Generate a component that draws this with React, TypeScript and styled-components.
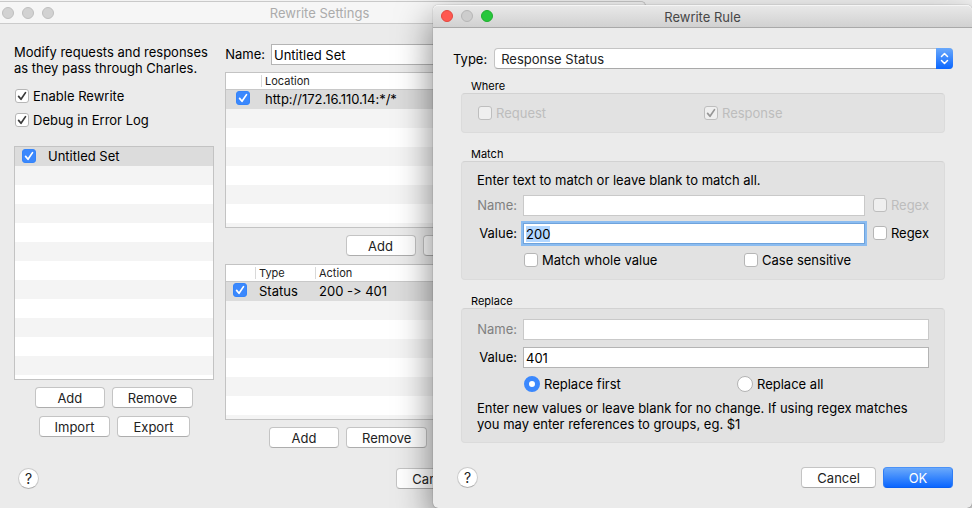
import React, { useEffect, useId, useRef } from "react";
import styled, { createGlobalStyle, css } from "styled-components";

const GlobalStyle = createGlobalStyle`
  *, *::before, *::after { box-sizing: border-box; }
  body { margin: 0; background: #f3f3f3; }
  body, button, input, select {
    font-family: Inter, "Liberation Sans", sans-serif;
    font-size: 13px;
    font-variant-ligatures: no-contextual;
    line-height: 16px;
    color: #000;
  }
`;

const Desktop = styled.div`
  position: relative;
  min-height: 100vh;
  padding-top: 1px;
  overflow: hidden;
`;

const Window = styled.section`
  background: #ebebeb;
  border-radius: 5px;
`;

const SettingsWindow = styled(Window)`
  margin: 0 326px 0 -6px;
  min-height: calc(100vh - 1px);
  border-top: 1px solid #c9c9c9;
  border-right: 1px solid #c9c9c9;
`;

const RuleWindow = styled(Window)`
  position: absolute;
  top: 5px;
  left: 433px;
  right: 0;
  box-shadow: 0 0 1px rgba(0, 0, 0, 0.6), 0 14px 36px rgba(0, 0, 0, 0.5);
`;

const TitleBar = styled.header<{ $active?: boolean }>`
  display: grid;
  grid-template-columns: 52px 1fr 52px;
  align-items: center;
  height: ${(p) => (p.$active ? 23 : 22)}px;
  padding: 0 8px;
  border-radius: 5px 5px 0 0;
  color: ${(p) => (p.$active ? "#474747" : "#ababab")};
  background: ${(p) => (p.$active ? "linear-gradient(#e9e9e9, #d1d1d1)" : "#f6f6f6")};
  border-bottom: 1px solid ${(p) => (p.$active ? "#a9a9a9" : "#cbcbcb")};
  ${(p) => p.$active && css`box-shadow: inset 0 1px #f5f5f5;`}
`;

const Title = styled.h1`
  margin: 0;
  padding-top: 1px;
  font-size: 13px;
  font-weight: 400;
  text-align: center;
`;

const Lights = styled.div`
  display: flex;
  gap: 8px;
`;

const Light = styled.button<{ $fill?: string; $edge?: string }>`
  width: 12px;
  height: 12px;
  padding: 0;
  border-radius: 50%;
  border: 1px solid ${(p) => p.$edge ?? "#bfbfbf"};
  background: ${(p) => p.$fill ?? "#d2d2d2"};
`;

const Button = styled.button<{ $primary?: boolean; $covered?: boolean }>`
  height: 21px;
  min-width: ${(p) => (p.$covered ? 82 : 70)}px;
  padding: 0 15px;
  border: 1px solid #c4c4c4;
  border-bottom-color: #adadad;
  border-radius: 4px;
  background: #fff;
  white-space: nowrap;
  line-height: 18px;
  color: #222;
  ${(p) =>
    p.$primary &&
    css`
      color: #fff;
      border-color: #4b92f7 #2f7df5 #0a5ff0;
      background: linear-gradient(#6aa9fb, #0a66ff);
    `}
`;

const HelpButton = styled.button`
  width: 21px;
  height: 21px;
  padding: 0;
  border: 1px solid #cacaca;
  border-bottom-color: #b0b0b0;
  border-radius: 50%;
  background: #fff;
  font-size: 14px;
  line-height: 18px;
  color: #222;
`;

const ButtonRow = styled.div<{ $start?: boolean }>`
  display: flex;
  align-items: flex-start;
  gap: 7px;
  height: 22px;
  justify-content: ${(p) => (p.$start ? "flex-start" : "center")};
  padding-left: ${(p) => (p.$start ? 44 : 0)}px;
`;

/* check boxes and radio buttons */

const Option = styled.label<{ $off?: boolean; $wide?: boolean }>`
  display: flex;
  align-items: center;
  gap: ${(p) => (p.$wide ? 12 : 4)}px;
  height: 16px;
  padding-left: 1px;
  white-space: nowrap;
  color: ${(p) => (p.$off ? "#bdbdbd" : "#000")};
`;

const Tick = styled.span`
  display: inline-grid;
  width: 14px;
  height: 14px;
  flex: none;
  > * { grid-area: 1 / 1; }
  svg { pointer-events: none; }
`;

const Box = styled.input<{ $blue?: boolean }>`
  appearance: none;
  width: 14px;
  height: 14px;
  margin: 0;
  border: 1px solid #b6b6b6;
  border-radius: 3px;
  background: #fff;
  &:disabled { background: #efefef; border-color: #bebebe; }
  ${(p) => p.$blue && css`border-color: #3484fa; background: #3b88fd;`}
`;

const Radio = styled.input`
  appearance: none;
  width: 16px;
  height: 16px;
  margin: 0;
  border: 1px solid #b3b3b3;
  border-radius: 50%;
  background: #fff;
  &:checked { border: 5px solid #3b88fd; }
`;

type CheckProps = {
  label?: string;
  name?: string;
  checked?: boolean;
  disabled?: boolean;
  blue?: boolean;
  wide?: boolean;
};

function TickBox({ checked, disabled, blue, name }: CheckProps) {
  return (
    <Tick>
      <Box type="checkbox" defaultChecked={checked} disabled={disabled} $blue={blue} aria-label={name} />
      {checked && (
        <svg width="14" height="14" viewBox="0 0 14 14" fill="none" aria-hidden="true">
          <path
            d="M3.6 7.4 6 10.3 10.5 3.6"
            stroke={blue ? "#fff" : disabled ? "#969696" : "#3a3a3a"}
            strokeWidth="1.7"
            strokeLinecap="round"
            strokeLinejoin="round"
          />
        </svg>
      )}
    </Tick>
  );
}

function Check(props: CheckProps) {
  return (
    <Option $off={props.disabled} $wide={props.wide}>
      <TickBox {...props} />
      {props.label}
    </Option>
  );
}

/* text fields */

const Field = styled.input`
  width: 100%;
  min-width: 0;
  height: 21px;
  padding: 1px 2px 0;
  border: 1px solid #b4b4b4;
  border-radius: 0;
  background: #fff;
  outline: none;
  &:disabled { border-color: #c9c9c9; }
  &:focus { border-color: #6fa3dc; box-shadow: 0 0 0 2px #8bbcf0; }
  &::selection { background: #b3d7ff; color: #000; }
`;

const FieldRow = styled.div`
  display: grid;
  grid-template-columns: 46px minmax(0, 1fr) auto;
  align-items: center;
`;

const FieldLabel = styled.label<{ $off?: boolean }>`
  padding: 0 6px 1px 0;
  display: flex;
  justify-content: flex-end;
  color: ${(p) => (p.$off ? "#808080" : "#000")};
`;

const Trailing = styled.div`
  padding: 0 0 1px 7px;
`;

/* settings window */

const Columns = styled.div`
  display: grid;
  grid-template-columns: 200px minmax(0, 1fr);
  gap: 11px;
  padding: 20px 20px 0;
`;

const Column = styled.div`
  display: flex;
  flex-direction: column;
  gap: 7px;
`;

const Intro = styled.p`
  margin: 0;
  white-space: nowrap;
`;

const Switches = styled.div`
  display: flex;
  flex-direction: column;
  gap: 8px;
  padding: 5px 0 11px;
`;

const SetList = styled.ul`
  height: 234px;
  margin: 0;
  padding: 0;
  list-style: none;
  border: 1px solid #c3c3c3;
  background: repeating-linear-gradient(#fff 0 19px, #f4f4f4 19px 38px);
`;

const SetItem = styled.li`
  display: flex;
  align-items: center;
  height: 19px;
  padding: 0 0 1px 6px;
  background: #dcdcdc;
`;

const TableFrame = styled.div`
  height: 156px;
  border: 1px solid #c3c3c3;
  background: repeating-linear-gradient(#fff 0 19px, #f4f4f4 19px 38px) 0 17px no-repeat, #fff;
`;

const Table = styled.table<{ $first: number }>`
  width: 100%;
  table-layout: fixed;
  border-collapse: separate;
  border-spacing: 0;
  text-align: left;
  th {
    height: 17px;
    padding: 0 0 0 4px;
    border-bottom: 1px solid #c8c8c8;
    background: linear-gradient(#d9d9d9, #d9d9d9) 0 2px / 1px 12px no-repeat, #fff;
    font-size: 11px;
    font-weight: 400;
    line-height: 14px;
    color: #222;
  }
  th:first-child { width: ${(p) => p.$first}px; background: #fff; }
  td {
    height: 19px;
    padding: 0 0 1px 4px;
    background: #dcdcdc;
    white-space: nowrap;
  }
  td:first-child { padding: 0 2px 1px 0; text-align: center; }
  td ${Tick} { vertical-align: top; }
`;

const TypeHead = styled.th`
  width: 60px;
`;

const NameRow = styled.div`
  display: grid;
  grid-template-columns: 46px minmax(0, 1fr);
  align-items: center;
`;

const SettingsFooter = styled.footer`
  display: flex;
  justify-content: space-between;
  padding: 19px 174px 18px 24px;
`;

/* rule window */

const RuleBody = styled.form`
  padding: 20px 19px 20px 20px;
`;

const TypeRow = styled.div`
  display: flex;
  align-items: center;
  gap: 7px;
  margin-bottom: 10px;
`;

const SelectWrap = styled.div`
  display: grid;
  flex: 1;
  > * { grid-area: 1 / 1; }
`;

const Select = styled.select`
  appearance: none;
  width: 100%;
  height: 21px;
  padding: 0 24px 0 6px;
  border: 1px solid #c4c4c4;
  border-bottom-color: #a9a9a9;
  border-radius: 4px;
  background: #fff;
  color: #222;
`;

const Stepper = styled.span`
  display: grid;
  place-items: center;
  justify-self: end;
  width: 17px;
  height: 21px;
  border-radius: 0 4px 4px 0;
  background: linear-gradient(#6aa9fb, #0a66ff);
  pointer-events: none;
`;

const Group = styled.fieldset`
  min-width: 0;
  margin: 0 8px 14px;
  padding: 0;
  border: 0;
`;

const Legend = styled.legend`
  padding: 0 0 0 10px;
  font-size: 11px;
  line-height: 14px;
`;

const Panel = styled.div<{ $pad: number }>`
  display: flex;
  flex-direction: column;
  gap: 7px;
  padding: ${(p) => p.$pad}px 15px;
  border: 1px solid #dbdbdb;
  border-top-color: #d2d2d2;
  border-radius: 4px;
  background: #e2e2e2;
`;

const Note = styled.p`
  margin: 0;
`;

const Pair = styled.div<{ $cols: string; $inset?: boolean }>`
  display: grid;
  grid-template-columns: ${(p) => p.$cols};
  padding: ${(p) => (p.$inset ? "1px 0 1px 46px" : "0")};
`;

const RuleFooter = styled.footer`
  display: flex;
  gap: 7px;
  padding: 10px 0 0 4px;
  ${HelpButton} { margin-right: auto; }
`;

function SettingsPane() {
  const id = useId();
  return (
    <SettingsWindow aria-label="Rewrite Settings">
      <TitleBar>
        <Lights>
          <Light aria-label="Close" />
          <Light aria-label="Minimize" />
          <Light aria-label="Zoom" />
        </Lights>
        <Title>Rewrite Settings</Title>
      </TitleBar>
      <Columns>
        <Column>
          <Intro>
            Modify requests and responses
            <br />
            as they pass through Charles.
          </Intro>
          <Switches>
            <Check label="Enable Rewrite" checked />
            <Check label="Debug in Error Log" checked />
          </Switches>
          <SetList>
            <SetItem>
              <Check label="Untitled Set" checked blue wide />
            </SetItem>
          </SetList>
          <ButtonRow>
            <Button>Add</Button>
            <Button>Remove</Button>
          </ButtonRow>
          <ButtonRow>
            <Button>Import</Button>
            <Button>Export</Button>
          </ButtonRow>
        </Column>
        <Column>
          <NameRow>
            <FieldLabel htmlFor={id}>Name:</FieldLabel>
            <Field id={id} defaultValue="Untitled Set" />
          </NameRow>
          <TableFrame>
            <Table $first={35}>
              <thead>
                <tr>
                  <th />
                  <th>Location</th>
                </tr>
              </thead>
              <tbody>
                <tr>
                  <td><TickBox checked blue name="Location enabled" /></td>
                  <td>http://172.16.110.14:*/*</td>
                </tr>
              </tbody>
            </Table>
          </TableFrame>
          <ButtonRow>
            <Button>Add</Button>
            <Button $covered aria-label="Remove location" />
          </ButtonRow>
          <TableFrame>
            <Table $first={29}>
              <thead>
                <tr>
                  <th />
                  <TypeHead>Type</TypeHead>
                  <th>Action</th>
                </tr>
              </thead>
              <tbody>
                <tr>
                  <td><TickBox checked blue name="Rule enabled" /></td>
                  <td>Status</td>
                  <td>200 -&gt; 401</td>
                </tr>
              </tbody>
            </Table>
          </TableFrame>
          <ButtonRow $start>
            <Button>Add</Button>
            <Button>Remove</Button>
          </ButtonRow>
        </Column>
      </Columns>
      <SettingsFooter>
        <HelpButton aria-label="Help">?</HelpButton>
        <Button>Cancel</Button>
      </SettingsFooter>
    </SettingsWindow>
  );
}

function RuleDialog() {
  const id = useId();
  const valueRef = useRef<HTMLInputElement>(null);
  useEffect(() => {
    valueRef.current?.focus();
    valueRef.current?.select();
  }, []);
  return (
    <RuleWindow role="dialog" aria-label="Rewrite Rule">
      <TitleBar $active>
        <Lights>
          <Light aria-label="Close" $fill="#ff5850" $edge="#e2473f" />
          <Light aria-label="Minimize" $fill="#cdcdcd" $edge="#b6b6b6" />
          <Light aria-label="Zoom" $fill="#27c73c" $edge="#1fae2e" />
        </Lights>
        <Title>Rewrite Rule</Title>
      </TitleBar>
      <RuleBody onSubmit={(e) => e.preventDefault()}>
        <TypeRow>
          <label htmlFor={id + "type"}>Type:</label>
          <SelectWrap>
            <Select id={id + "type"}>
              <option>Response Status</option>
            </Select>
            <Stepper>
              <svg width="9" height="13" viewBox="0 0 9 13" fill="none" stroke="#fff" strokeWidth="1.5" strokeLinecap="round" strokeLinejoin="round" aria-hidden="true">
                <path d="M1.5 4.5 4.5 1.5 7.5 4.5M1.5 8.5 4.5 11.5 7.5 8.5" />
              </svg>
            </Stepper>
          </SelectWrap>
        </TypeRow>
        <Group>
          <Legend>Where</Legend>
          <Panel $pad={11}>
            <Pair $cols="1fr 1fr">
              <Check label="Request" disabled />
              <Check label="Response" checked disabled />
            </Pair>
          </Panel>
        </Group>
        <Group>
          <Legend>Match</Legend>
          <Panel $pad={10}>
            <Note>Enter text to match or leave blank to match all.</Note>
            <FieldRow>
              <FieldLabel htmlFor={id + "mn"} $off>Name:</FieldLabel>
              <Field id={id + "mn"} disabled />
              <Trailing><Check label="Regex" disabled /></Trailing>
            </FieldRow>
            <FieldRow>
              <FieldLabel htmlFor={id + "mv"}>Value:</FieldLabel>
              <Field id={id + "mv"} ref={valueRef} defaultValue="200" />
              <Trailing><Check label="Regex" /></Trailing>
            </FieldRow>
            <Pair $cols="220px 1fr" $inset>
              <Check label="Match whole value" />
              <Check label="Case sensitive" />
            </Pair>
          </Panel>
        </Group>
        <Group>
          <Legend>Replace</Legend>
          <Panel $pad={10}>
            <FieldRow>
              <FieldLabel htmlFor={id + "rn"} $off>Name:</FieldLabel>
              <Field id={id + "rn"} disabled />
            </FieldRow>
            <FieldRow>
              <FieldLabel htmlFor={id + "rv"}>Value:</FieldLabel>
              <Field id={id + "rv"} defaultValue="401" />
            </FieldRow>
            <Pair $cols="213px 1fr" $inset>
              <Option><Radio type="radio" name="scope" defaultChecked />Replace first</Option>
              <Option><Radio type="radio" name="scope" />Replace all</Option>
            </Pair>
            <Note>
              Enter new values or leave blank for no change. If using regex matches
              <br />
              you may enter references to groups, eg. $1
            </Note>
          </Panel>
        </Group>
        <RuleFooter>
          <HelpButton type="button" aria-label="Help">?</HelpButton>
          <Button type="button">Cancel</Button>
          <Button $primary>OK</Button>
        </RuleFooter>
      </RuleBody>
    </RuleWindow>
  );
}

export default function App() {
  return (
    <Desktop>
      <GlobalStyle />
      <SettingsPane />
      <RuleDialog />
    </Desktop>
  );
}
